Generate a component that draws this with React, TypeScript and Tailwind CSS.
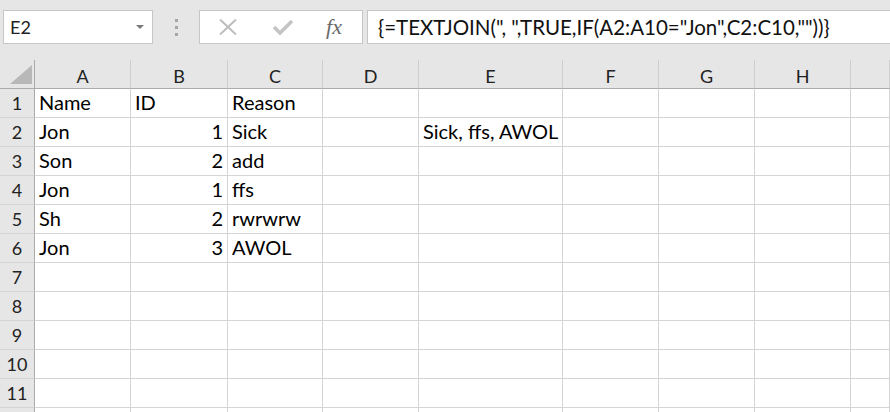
import React from "react";

const cols = ["A", "B", "C", "D", "E", "F", "G", "H", ""];

type Cell = { v: string; right?: boolean };
const data: Record<number, Record<number, Cell>> = {
  1: { 0: { v: "Name" }, 1: { v: "ID" }, 2: { v: "Reason" } },
  2: { 0: { v: "Jon" }, 1: { v: "1", right: true }, 2: { v: "Sick" }, 4: { v: "Sick, ffs, AWOL" } },
  3: { 0: { v: "Son" }, 1: { v: "2", right: true }, 2: { v: "add" } },
  4: { 0: { v: "Jon" }, 1: { v: "1", right: true }, 2: { v: "ffs" } },
  5: { 0: { v: "Sh" }, 1: { v: "2", right: true }, 2: { v: "rwrwrw" } },
  6: { 0: { v: "Jon" }, 1: { v: "3", right: true }, 2: { v: "AWOL" } },
};

export default function App() {
  const rows = Array.from({ length: 12 }, (_, i) => i + 1);
  return (
    <div
      className="w-[890px] h-[412px] overflow-hidden bg-white text-[#000]"
      style={{ fontFamily: "Lato, 'Noto Sans', sans-serif" }}
    >
      {/* Toolbar */}
      <div className="h-[60px] bg-[#e6e6e6] flex items-start pt-[10px]">
        <div className="ml-[3px] w-[150px] h-[34px] bg-white border border-[#c6c6c6] flex items-center justify-between pl-[6px] pr-[8px]">
          <span className="text-[18px] leading-none text-[#222]">E2</span>
          <svg width="8" height="5" viewBox="0 0 8 5">
            <path d="M0 0 L8 0 L4 4 Z" fill="#7a7a7a" />
          </svg>
        </div>
        <div className="w-[46px] h-[34px] flex flex-col items-center justify-center gap-[4px]">
          <div className="w-[3px] h-[3px] bg-[#a6a6a6]" />
          <div className="w-[3px] h-[3px] bg-[#a6a6a6]" />
          <div className="w-[3px] h-[3px] bg-[#a6a6a6]" />
        </div>
        <div className="w-[164px] h-[34px] bg-white border border-[#c6c6c6] flex items-center">
          <div className="w-[55px] flex justify-center">
            <svg width="18" height="16" viewBox="0 0 18 16">
              <path d="M1 0.5 L17 15.5 M17 0.5 L1 15.5" stroke="#bdbdbd" strokeWidth="2" />
            </svg>
          </div>
          <div className="w-[55px] flex justify-center">
            <svg width="20" height="15" viewBox="0 0 20 15">
              <path d="M1 7 L7 13 L19 1" stroke="#c4c4c4" strokeWidth="3.5" fill="none" />
            </svg>
          </div>
          <div className="w-[48px] flex justify-center">
            <span
              className="text-[22px] leading-none italic text-[#6a6a6a]"
              style={{ fontFamily: "'Liberation Serif', 'DejaVu Serif', serif" }}
            >
              fx
            </span>
          </div>
        </div>
        <div className="ml-[4px] flex-1 h-[34px] bg-white border border-r-0 border-[#c6c6c6] flex items-center pl-[10px]">
          <span className="text-[20.5px] leading-none text-[#111] whitespace-pre">
            {'{=TEXTJOIN(", ",TRUE,IF(A2:A10="Jon",C2:C10,""))}'}
          </span>
        </div>
      </div>

      {/* Grid */}
      <div className="grid grid-cols-[35px_96px_97px_95px_96px_144px_96px_96px_96px_1fr] auto-rows-[29px]">
        {/* header row */}
        <div className="bg-[#e6e6e6] border-r border-b border-[#ababab] relative">
          <svg className="absolute left-[10px] top-[5px]" width="23" height="20" viewBox="0 0 23 20">
            <path d="M0 19 L22 19 L22 0 Z" fill="#b8b8b8" />
          </svg>
        </div>
        {cols.map((c, i) => (
          <div
            key={"h" + i}
            className="bg-[#e6e6e6] border-r border-r-[#cfcfcf] border-b border-b-[#ababab] flex items-end justify-center pb-[3px] text-[18px] leading-none text-[#222]"
          >
            {c}
          </div>
        ))}
        {rows.map((r) => (
          <React.Fragment key={r}>
            <div className="bg-[#e6e6e6] border-r border-r-[#ababab] border-b border-b-[#d4d4d4] flex items-end justify-center pb-[5px] text-[18px] leading-none text-[#222]">
              {r <= 11 ? r : ""}
            </div>
            {cols.map((_, ci) => {
              const cell = data[r]?.[ci];
              return (
                <div
                  key={ci}
                  className={
                    "border-r border-b border-[#d4d4d4] flex items-end pb-[5px] px-[4px] text-[20px] leading-none whitespace-nowrap " +
                    (cell?.right ? "justify-end" : "justify-start")
                  }
                >
                  {cell?.v ?? ""}
                </div>
              );
            })}
          </React.Fragment>
        ))}
      </div>
    </div>
  );
}
